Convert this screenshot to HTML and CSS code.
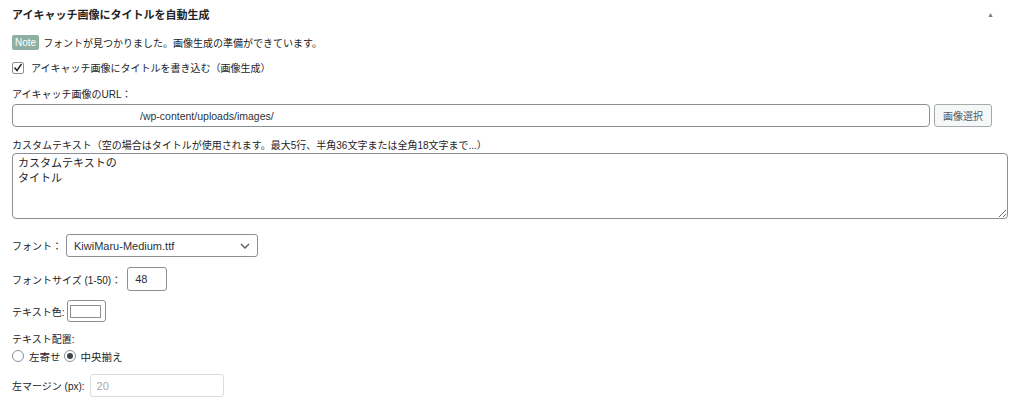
FILE: index.html
```html
<!DOCTYPE html>
<html lang="ja">
<head>
    <meta charset="UTF-8">
    <meta name="viewport" content="width=device-width, initial-scale=1.0">
    <title>アイキャッチ画像にタイトルを自動生成</title>
<link rel="stylesheet" href="styles.css">
</head>
<body>

<div class="postbox">
    <div class="postbox-header">
        <h2>アイキャッチ画像にタイトルを自動生成</h2>
        <span class="toggle">&#9650;</span>
    </div>

    <div class="inside">
        <p class="row note-row"><span class="note">Note</span>フォントが見つかりました。画像生成の準備ができています。</p>

        <p class="row check-row">
            <span class="checkbox"><svg width="10" height="9" viewBox="0 0 10 9"><path d="M1.5 4.5l2.5 3 4.5-6.5" fill="none" stroke="#1d2327" stroke-width="1.4"/></svg></span>
            <span>アイキャッチ画像にタイトルを書き込む（画像生成）</span>
        </p>

        <p class="field-label">アイキャッチ画像のURL：</p>
        <div class="url-row">
            <input type="text" class="url-input" value="/wp-content/uploads/images/">
            <button type="button" class="button">画像選択</button>
        </div>

        <p class="field-label custom-label">カスタムテキスト（空の場合はタイトルが使用されます。最大5行、半角36文字または全角18文字まで...）</p>
        <textarea class="custom-text">カスタムテキストの
タイトル</textarea>

        <div class="row inline-row font-row">
            <span>フォント：</span>
            <div class="select">
                <span>KiwiMaru-Medium.ttf</span>
                <svg width="10" height="6" viewBox="0 0 10 6"><path d="M1 1l4 4 4-4" fill="none" stroke="#50575e" stroke-width="1.3"/></svg>
            </div>
        </div>

        <div class="row inline-row size-row">
            <span>フォントサイズ (1-50)：</span>
            <input type="text" class="size-input" value="48">
        </div>

        <div class="row inline-row color-row">
            <span>テキスト色:</span>
            <span class="color-button"><span class="swatch"></span></span>
        </div>

        <p class="field-label align-label">テキスト配置:</p>
        <div class="radio-row">
            <span class="radio"></span><span class="radio-text">左寄せ</span>
            <span class="radio checked"></span><span class="radio-text">中央揃え</span>
        </div>

        <div class="row inline-row margin-row">
            <span>左マージン (px):</span>
            <input type="text" class="margin-input" value="20" disabled>
        </div>
    </div>
</div>

</body>
</html>
```

FILE: styles.css
```css
body {
    margin: 0;
    padding: 0;
    background: #ffffff;
    color: #1d2327;
    font-family: 'Liberation Sans', 'Noto Sans CJK JP', sans-serif;
    font-size: 10px;
}
.postbox {
    width: 1024px;
}
.postbox-header {
    display: flex;
    justify-content: space-between;
    align-items: center;
    height: 28px;
    padding: 0 30px 0 12px;
}
.postbox-header h2 {
    margin: 0;
    font-size: 11px;
    font-weight: bold;
}
.toggle {
    font-size: 7px;
    color: #787c82;
}
.inside {
    padding: 0 16px 0 12px;
}
p {
    margin: 0;
}
.row {
    display: flex;
    align-items: center;
}
.note-row {
    height: 15px;
    margin-top: 7px;
}
.note {
    display: inline-block;
    background: #8fafa3;
    color: #ffffff;
    font-size: 10px;
    line-height: 15px;
    padding: 0 3px;
    border-radius: 2px;
    margin-right: 4px;
}
.check-row {
    margin-top: 11px;
    height: 13px;
}
.checkbox {
    width: 12px;
    height: 12px;
    box-sizing: border-box;
    border: 1px solid #8c8f94;
    border-radius: 2px;
    display: inline-flex;
    align-items: center;
    justify-content: center;
    margin-right: 7px;
}
.field-label {
    margin-top: 14px;
    line-height: 14px;
}
.url-row {
    display: flex;
    gap: 4px;
    margin-top: 2px;
}
.url-input {
    width: 918px;
    height: 23px;
    box-sizing: border-box;
    border: 1px solid #8c8f94;
    border-radius: 4px;
    padding: 0 0 0 127px;
    font-family: inherit;
    font-size: 10.5px;
    color: #2c3338;
}
.button {
    height: 23px;
    width: 58px;
    box-sizing: border-box;
    background: #f6f7f7;
    border: 1px solid #a7aaad;
    border-radius: 3px;
    color: #50575e;
    font-family: inherit;
    font-size: 10px;
    padding: 0;
}
.custom-label {
    margin-top: 12px;
}
.custom-text {
    display: block;
    width: 996px;
    height: 66px;
    box-sizing: border-box;
    margin-top: 0;
    border: 1px solid #8c8f94;
    border-radius: 4px;
    padding: 2px 5px;
    font-family: inherit;
    font-size: 11px;
    line-height: 15px;
    color: #1d2327;
    resize: vertical;
}
.inline-row span:first-child {
    margin-right: 4px;
}
.font-row {
    margin-top: 15px;
}
.select {
    width: 192px;
    height: 23px;
    box-sizing: border-box;
    border: 1px solid #8c8f94;
    border-radius: 3px;
    display: flex;
    align-items: center;
    justify-content: space-between;
    padding: 0 7px 0 7px;
    font-size: 11px;
    color: #2c3338;
}
.size-row {
    margin-top: 10px;
}
.size-row span:first-child {
    margin-right: 6px;
}
.size-input {
    width: 40px;
    height: 24px;
    box-sizing: border-box;
    border: 1px solid #8c8f94;
    border-radius: 3px;
    padding: 0 7px;
    font-family: inherit;
    font-size: 11px;
    color: #2c3338;
}
.color-row {
    margin-top: 9px;
}
.color-button {
    display: inline-flex;
    align-items: center;
    justify-content: center;
    width: 39px;
    height: 22px;
    box-sizing: border-box;
    border: 1px solid #8c8f94;
    border-radius: 3px;
}
.color-row span:first-child {
    margin-right: 3px;
}
.swatch {
    width: 29px;
    height: 11px;
    border: 1px solid #8c8f94;
    background: #ffffff;
}
.align-label {
    margin-top: 11px;
}
.radio-row {
    display: flex;
    align-items: center;
    margin-top: 2px;
    height: 14px;
}
.radio {
    width: 12px;
    height: 12px;
    box-sizing: border-box;
    border: 1px solid #8c8f94;
    border-radius: 50%;
    display: inline-flex;
    align-items: center;
    justify-content: center;
}
.radio.checked::after {
    content: "";
    width: 6px;
    height: 6px;
    border-radius: 50%;
    background: #3c434a;
}
.radio-text {
    margin: 0 3px 0 5px;
    font-size: 10.5px;
}
.margin-row {
    margin-top: 11px;
}
.margin-row span:first-child {
    margin-right: 5px;
}
.margin-input {
    width: 134px;
    height: 23px;
    box-sizing: border-box;
    border: 1px solid #dcdcde;
    border-radius: 3px;
    background: #ffffff;
    padding: 0 6px;
    font-family: inherit;
    font-size: 11px;
    color: #a7aaad;
}
```
